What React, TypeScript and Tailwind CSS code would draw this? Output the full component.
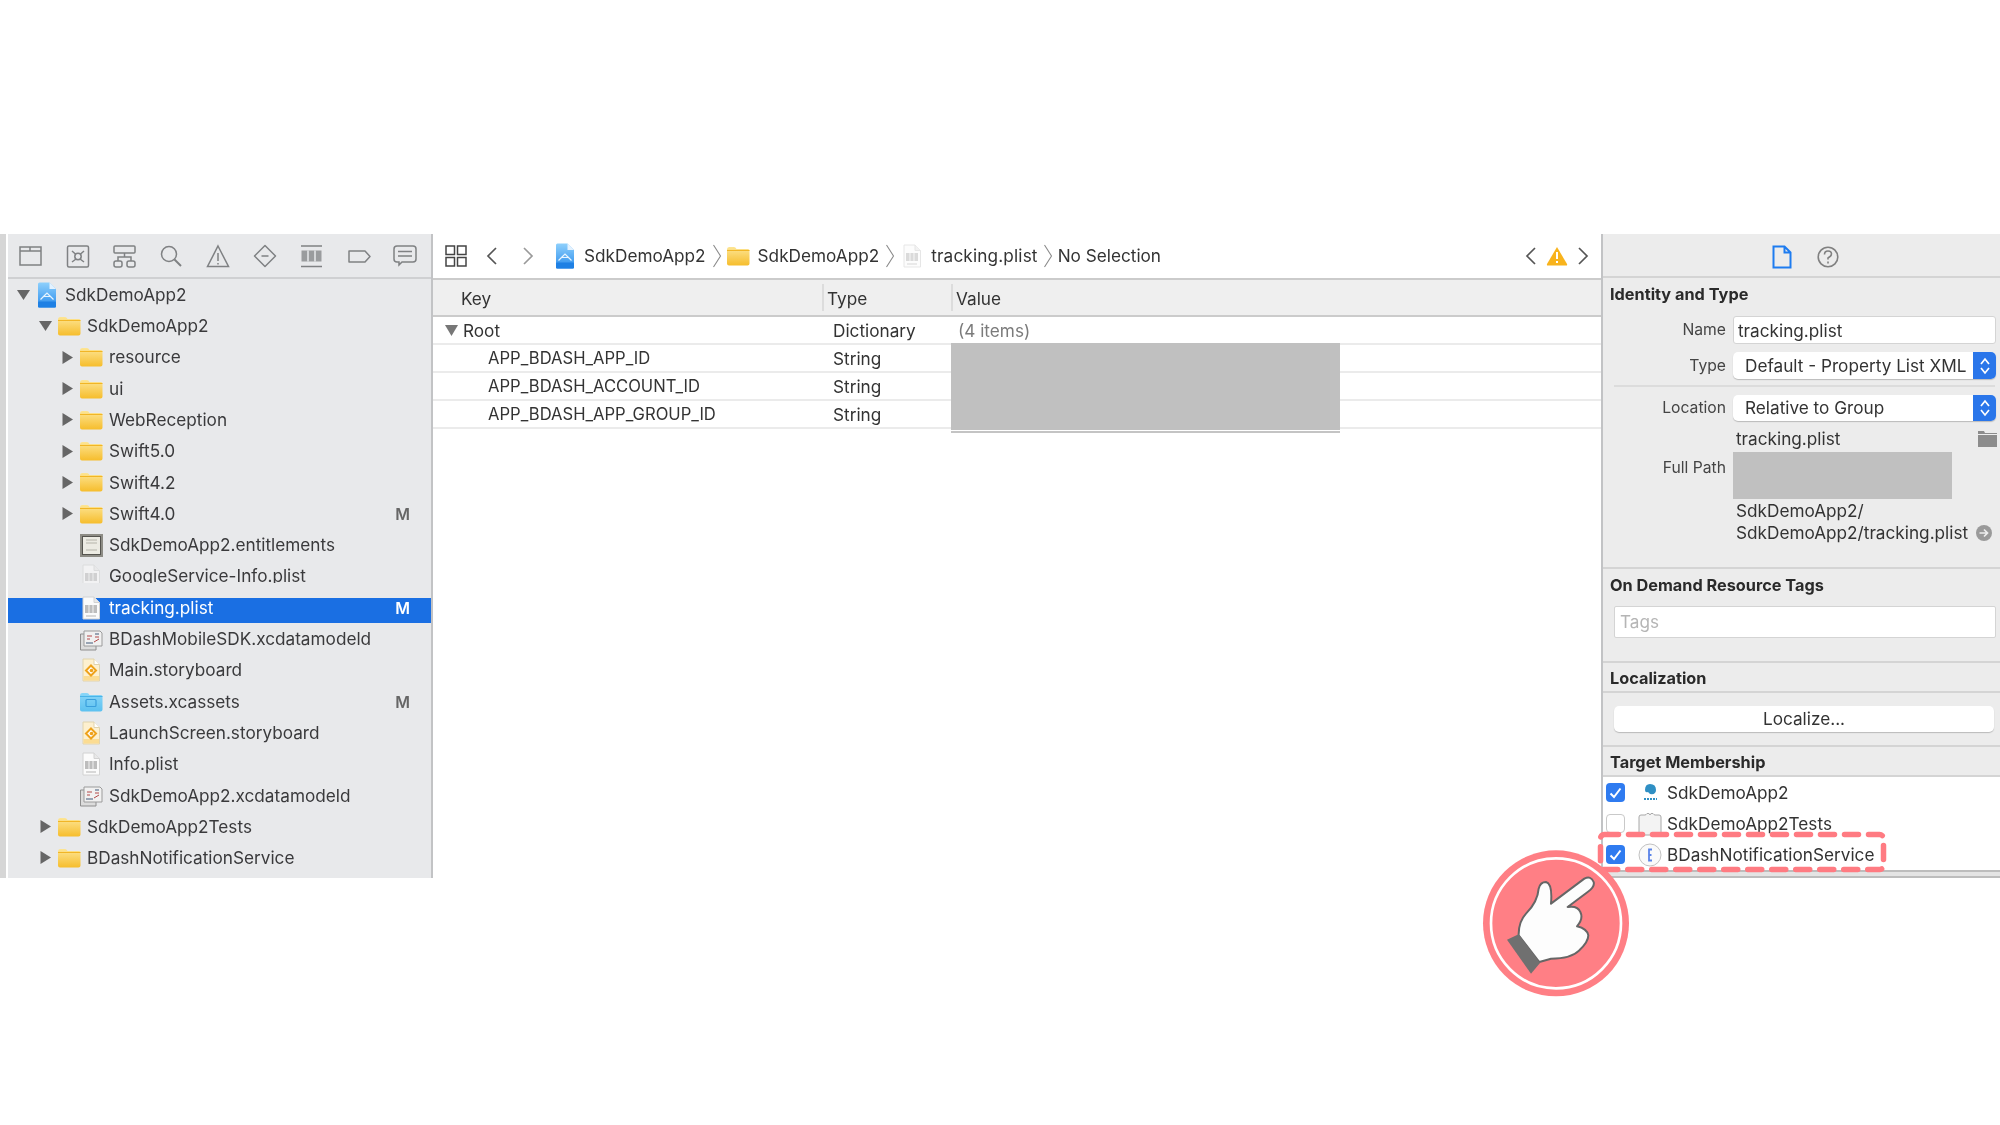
import React from "react";

const Folder = ({ blue = false }: { blue?: boolean }) => (
  <svg width="24" height="20" viewBox="0 0 24 20" className="shrink-0">
    <defs>
      <linearGradient id="fy" x1="0" y1="0" x2="0" y2="1">
        <stop offset="0" stopColor="#fde594" />
        <stop offset="1" stopColor="#f6bd2c" />
      </linearGradient>
      <linearGradient id="fb" x1="0" y1="0" x2="0" y2="1">
        <stop offset="0" stopColor="#8ad6f8" />
        <stop offset="1" stopColor="#5cc1f0" />
      </linearGradient>
    </defs>
    <path d="M1 3.5 Q1 1 3 1 H8 Q9.5 1 10.5 3 H22 Q23.5 3 23.5 5 V17.5 Q23.5 19.5 21.5 19.5 H3 Q1 19.5 1 17.5 Z" fill={blue ? "url(#fb)" : "url(#fy)"} />
    <path d="M1 4.5 H23.5" stroke={blue ? "#4ab4e8" : "#f1b526"} strokeWidth="1" />
    {blue && <rect x="7" y="7.5" width="10" height="7" rx="1" fill="none" stroke="#3a9fdc" strokeWidth="1.2" />}
  </svg>
);

const Plist = ({ faint = false }: { faint?: boolean }) => (
  <svg width="20" height="24" viewBox="0 0 20 24" className="shrink-0" opacity={faint ? 0.55 : 1}>
    <path d="M2 1 H13 L18.5 6.5 V23 H2 Z" fill="#fbfbfb" stroke="#d2d2d2" />
    <path d="M13 1 V6.5 H18.5" fill="#e8e8e8" stroke="#d2d2d2" />
    <rect x="4" y="9" width="12" height="8" fill="#bdbdbd" />
    <path d="M8 9 V17 M12 9 V17" stroke="#f2f2f2" />
    <path d="M5 20 H15" stroke="#b5b5b5" />
  </svg>
);

const Story = () => (
  <svg width="20" height="24" viewBox="0 0 20 24" className="shrink-0">
    <path d="M2 1 H13 L18.5 6.5 V23 H2 Z" fill="#fdf0cf" stroke="#e0d3ae" />
    <path d="M13 1 V6.5 H18.5" fill="#fff" stroke="#e0d3ae" />
    <rect x="2.5" y="18" width="15.5" height="4.5" fill="#fbdc92" />
    <path d="M10 7.5 L15 12.5 L10 17.5 L5 12.5 Z" fill="#fff" stroke="#eea21a" strokeWidth="2" />
    <circle cx="10.5" cy="12.5" r="1.8" fill="#eea21a" />
  </svg>
);

const DataModel = () => (
  <svg width="24" height="24" viewBox="0 0 24 24" className="shrink-0">
    <path d="M1.5 7 H17 V23 H1.5 Z" fill="#dcdcdc" stroke="#8e8e8e" />
    <path d="M5 4 H21 L23 6 V19 H5 Z" fill="#f1f1f1" stroke="#9b9b9b" />
    <path d="M8 9 H13 M8 12 H11 M16 10 H20 M15 15 L20 12" stroke="#b34a4a" strokeWidth="1" />
    <path d="M7 16 H14 M16 7 H20" stroke="#7b8aa0" strokeWidth="1.3" />
  </svg>
);

const Cert = () => (
  <svg width="24" height="24" viewBox="0 0 24 24" className="shrink-0">
    <rect x="1" y="1" width="23" height="23" fill="#8d8c85" />
    <rect x="3.5" y="3.5" width="18" height="18" fill="#ecebe3" stroke="#55544f" />
    <path d="M7 7 H18 M7 10 H18 M7 17 H18" stroke="#b5b4aa" />
  </svg>
);

const AppDoc = () => (
  <svg width="20" height="26" viewBox="0 0 20 26" className="shrink-0">
    <defs>
      <linearGradient id="ap" x1="0" y1="0" x2="0" y2="1">
        <stop offset="0" stopColor="#8ed0fc" />
        <stop offset="1" stopColor="#2a8cec" />
      </linearGradient>
    </defs>
    <path d="M1 2 Q1 .5 2.5 .5 H12.5 L19 7 V24 Q19 25.5 17.5 25.5 H2.5 Q1 25.5 1 24 Z" fill="url(#ap)" />
    <path d="M12.5 .5 V7 H19 Z" fill="#e3f2ff" />
    <path d="M3.5 17.5 L7 14 L10 11 L13 14 L16.5 17.5" fill="none" stroke="#e6f4ff" strokeWidth="1.2" />
    <path d="M7 14.5 H13" stroke="#e6f4ff" strokeWidth="1" />
    <rect x="1" y="19.5" width="18" height="6" rx="1" fill="#1e80e4" />
  </svg>
);

const Tri = ({ open }: { open: boolean }) => (
  <svg width="13" height="13" viewBox="0 0 13 13" className="shrink-0">
    {open ? <path d="M0 2 H13 L6.5 12 Z" fill="#666" /> : <path d="M1.5 0 L12 6.5 L1.5 13 Z" fill="#666" />}
  </svg>
);

const navStroke = { fill: "none", stroke: "#7f8183", strokeWidth: 1.5 };
const NavIcons = () => (
  <div className="flex items-center h-[45px] border-b-2 border-[#cfd0d2] pl-[6px] gap-[12.8px]">
    <svg width="34" height="22" viewBox="0 0 34 22" {...navStroke}><path d="M6 2 H27 V20 H6 Z M6 6 H27 M6 2 H16 V6" /></svg>
    <svg width="34" height="24" viewBox="0 0 34 24" {...navStroke}><rect x="6.5" y="2" width="21" height="21" rx="1.5" /><circle cx="17" cy="12.5" r="3.2" /><path d="M11 7 L15 10.5 M23 7 L19 10.5 M11 18 L15 15 M23 18 L19 15" /></svg>
    <svg width="34" height="24" viewBox="0 0 34 24" {...navStroke}><rect x="6" y="2" width="21" height="7" rx="1" /><rect x="6" y="17" width="8" height="6" rx="2" /><rect x="19" y="17" width="8" height="6" rx="2" /><path d="M10 17 V13 H23 V17 M16.5 9 V13" /></svg>
    <svg width="34" height="24" viewBox="0 0 34 24" {...navStroke}><circle cx="15" cy="10" r="7.5" /><path d="M20.5 15.5 L27 22" strokeWidth="2" /></svg>
    <svg width="34" height="24" viewBox="0 0 34 24" {...navStroke}><path d="M17 2 L27.5 22.5 H6.5 Z" /><path d="M17 9 V17 M17 19 V20.5" /></svg>
    <svg width="34" height="24" viewBox="0 0 34 24" {...navStroke}><path d="M17 1.5 L27.5 12 L17 22.5 L6.5 12 Z" strokeLinejoin="round" /><path d="M13.5 12 H20.5" /></svg>
    <svg width="34" height="24" viewBox="0 0 34 24" {...navStroke}><path d="M6 2 H27 M6 22.5 H27" /><rect x="6.5" y="6.5" width="20" height="11" fill="#9a9c9e" stroke="none" /><path d="M13 6.5 V17.5 M20 6.5 V17.5" stroke="#e8e9eb" /></svg>
    <svg width="34" height="24" viewBox="0 0 34 24" {...navStroke}><path d="M7 7 H23 L28 12.5 L23 18 H7 Z" strokeLinejoin="round" /></svg>
    <svg width="34" height="24" viewBox="0 0 34 24" {...navStroke}><path d="M9 2 H25 Q28 2 28 5 V15 Q28 18 25 18 H14 L11 21 V18 H9 Q6 18 6 15 V5 Q6 2 9 2 Z" /><path d="M10 7.5 H24 M10 12 H24" /></svg>
  </div>
);

type RowProps = { icon: React.ReactNode; label: string; tri?: "open" | "closed"; m?: boolean; indent: string };

const Row = ({ icon, label, tri, m, indent }: RowProps) => (
  <div className={`flex items-center h-[31.3px] pr-[21px] ${indent}`}>
    <div className="w-[13px] shrink-0">{tri && <Tri open={tri === "open"} />}</div>
    <div className="w-[28px] ml-[3px] shrink-0 flex justify-center">{icon}</div>
    <span className="ml-[4px] text-[17.2px] text-[#3a3a3c] whitespace-nowrap flex-1">{label}</span>
    {m && <span className="text-[16px] font-semibold text-[#666]">M</span>}
  </div>
);

const L0 = "pl-[9px]";
const L1 = "pl-[31px]";
const L2 = "pl-[53px]";

const Sidebar = () => (
  <div className="flex h-full shrink-0">
    <div className="w-[6px] bg-[#d6d6d6]" />
    <div className="w-[2px] bg-white" />
    <div className="w-[423px] bg-[#e8e9eb] flex flex-col overflow-hidden">
      <NavIcons />
      <Row indent={L0} tri="open" icon={<AppDoc />} label="SdkDemoApp2" />
      <Row indent={L1} tri="open" icon={<Folder />} label="SdkDemoApp2" />
      <Row indent={L2} tri="closed" icon={<Folder />} label="resource" />
      <Row indent={L2} tri="closed" icon={<Folder />} label="ui" />
      <Row indent={L2} tri="closed" icon={<Folder />} label="WebReception" />
      <Row indent={L2} tri="closed" icon={<Folder />} label="Swift5.0" />
      <Row indent={L2} tri="closed" icon={<Folder />} label="Swift4.2" />
      <Row indent={L2} tri="closed" icon={<Folder />} label="Swift4.0" m />
      <Row indent={L2} icon={<Cert />} label="SdkDemoApp2.entitlements" />
      <div className="h-[31.3px] shrink-0">
        <div className="h-[22px] overflow-hidden">
          <div className="flex items-center h-[31.3px] pl-[53px]">
            <div className="w-[13px] shrink-0" />
            <div className="w-[28px] ml-[3px] shrink-0 flex justify-center"><Plist faint /></div>
            <span className="ml-[4px] text-[17.2px] text-[#3a3a3c] whitespace-nowrap">GoogleService-Info.plist</span>
          </div>
        </div>
      </div>
      <div className="flex items-start h-[25.3px] shrink-0 mt-[6px] pl-[53px] pr-[21px] bg-[#1a6fe3]">
        <div className="w-[13px] shrink-0" />
        <div className="w-[28px] ml-[3px] shrink-0 flex justify-center mt-[-2px]"><Plist /></div>
        <span className="ml-[4px] text-[17.2px] leading-[20px] text-white whitespace-nowrap flex-1">tracking.plist</span>
        <span className="text-[16px] leading-[20px] font-semibold text-white">M</span>
      </div>
      <Row indent={L2} icon={<DataModel />} label="BDashMobileSDK.xcdatamodeld" />
      <Row indent={L2} icon={<Story />} label="Main.storyboard" />
      <Row indent={L2} icon={<Folder blue />} label="Assets.xcassets" m />
      <Row indent={L2} icon={<Story />} label="LaunchScreen.storyboard" />
      <Row indent={L2} icon={<Plist />} label="Info.plist" />
      <Row indent={L2} icon={<DataModel />} label="SdkDemoApp2.xcdatamodeld" />
      <Row indent={L1} tri="closed" icon={<Folder />} label="SdkDemoApp2Tests" />
      <Row indent={L1} tri="closed" icon={<Folder />} label="BDashNotificationService" />
    </div>
  </div>
);

const Chev = ({ dir, color = "#555" }: { dir: "l" | "r"; color?: string }) => (
  <svg width="12" height="20" viewBox="0 0 12 20" fill="none" stroke={color} strokeWidth="1.7" className="shrink-0">
    <path d={dir === "l" ? "M10 2 L2 10 L10 18" : "M2 2 L10 10 L2 18"} />
  </svg>
);
const Crumb = () => (
  <svg width="10" height="24" viewBox="0 0 10 24" fill="none" stroke="#8a8a8a" strokeWidth="1.1" className="shrink-0">
    <path d="M1.5 1 L8.5 12 L1.5 23" />
  </svg>
);

const PlistRow = ({ k, v }: { k: string; v: string }) => (
  <div className="flex items-center h-[28px] pt-[1px] border-b-2 border-[#ebebeb] text-[#333]">
    <span className="w-[400px] pl-[55px] whitespace-nowrap text-[16.6px]">{k}</span>
    <span className="text-[17.2px]">{v}</span>
  </div>
);

const Center = () => (
  <div className="flex-1 min-w-0 flex flex-col border-l-2 border-r-2 border-[#c2c3c5]">
    <div className="flex items-center h-[46px] border-b-2 border-[#cbcbcb] pl-[12px] pr-[12px] text-[17.2px] text-[#333]">
      <svg width="22" height="22" viewBox="0 0 22 22" fill="none" stroke="#444" strokeWidth="1.5" className="shrink-0">
        <rect x="1" y="1" width="8.5" height="8.5" /><rect x="12.5" y="1" width="8.5" height="8.5" /><rect x="1" y="12.5" width="8.5" height="8.5" /><rect x="12.5" y="12.5" width="8.5" height="8.5" />
      </svg>
      <div className="ml-[19px]"><Chev dir="l" /></div>
      <div className="ml-[24px]"><Chev dir="r" color="#9a9a9a" /></div>
      <div className="ml-[21px] flex items-center gap-[9px]"><AppDoc /><span>SdkDemoApp2</span></div>
      <div className="ml-[6px]"><Crumb /></div>
      <div className="ml-[4px]"><Folder /></div>
      <span className="ml-[8px]">SdkDemoApp2</span>
      <div className="ml-[6px]"><Crumb /></div>
      <div className="ml-[7px]"><Plist faint /></div>
      <span className="ml-[9px] tracking-[0.15px]">tracking.plist</span>
      <div className="ml-[5px]"><Crumb /></div>
      <span className="ml-[5px]">No Selection</span>
      <div className="flex-1" />
      <Chev dir="l" />
      <svg width="22" height="20" viewBox="0 0 22 20" className="ml-[9px] shrink-0">
        <path d="M11 1 L21 18 Q21.5 19.5 20 19.5 H2 Q.5 19.5 1 18 Z" fill="#f8b31c" />
        <path d="M11 6 V13 M11 15 V17" stroke="#fff" strokeWidth="2" />
      </svg>
      <div className="ml-[9px]"><Chev dir="r" /></div>
    </div>
    <div className="flex items-center h-[37px] bg-[#efefef] border-b-2 border-[#cbcbcb] text-[17.2px] text-[#333]">
      <span className="w-[391px] pl-[28px] h-[27px] leading-[29px] border-r-2 border-[#dcdcdc]">Key</span>
      <span className="w-[129px] pl-[3px] h-[27px] leading-[29px] border-r-2 border-[#dcdcdc]">Type</span>
      <span className="pl-[3px] pt-[2px]">Value</span>
    </div>
    <div className="flex items-center h-[28px] pt-[1px] border-b-2 border-[#ebebeb] text-[17.2px] text-[#333]">
      <div className="w-[400px] pl-[12px] flex items-center gap-[5px]">
        <svg width="13" height="11" viewBox="0 0 13 11"><path d="M0 0 H13 L6.5 11 Z" fill="#777" /></svg>
        <span>Root</span>
      </div>
      <span className="w-[125px]">Dictionary</span>
      <span className="text-[#7b7b7b]">(4 items)</span>
    </div>
    <PlistRow k="APP_BDASH_APP_ID" v="String" />
    <PlistRow k="APP_BDASH_ACCOUNT_ID" v="String" />
    <PlistRow k="APP_BDASH_APP_GROUP_ID" v="String" />
  </div>
);

const Stepper = () => (
  <div className="w-[23px] h-full bg-[#2a76ea] rounded-r-[5px] flex items-center justify-center shrink-0">
    <svg width="12" height="20" viewBox="0 0 12 20" fill="none" stroke="#fff" strokeWidth="1.7"><path d="M2 8 L6 3 L10 8 M2 12 L6 17 L10 12" /></svg>
  </div>
);

const Popup = ({ text, h }: { text: string; h: string }) => (
  <div className={`flex items-center flex-1 ${h} bg-white rounded-[5px] shadow-[0_1px_1px_#bbb] text-[17.2px] text-[#333] pl-[12px]`}>
    <span className="flex-1 whitespace-nowrap">{text}</span>
    <Stepper />
  </div>
);

const Label = ({ children }: { children: React.ReactNode }) => (
  <span className="w-[130px] shrink-0 pr-[7px] text-right text-[15.7px] text-[#444]">{children}</span>
);

const Heading = ({ children }: { children: React.ReactNode }) => (
  <div className="text-[16.3px] font-bold text-[#2a2a2a] pl-[7px] pt-[2px] whitespace-nowrap">{children}</div>
);

const CheckBox = ({ on }: { on: boolean }) =>
  on ? (
    <div className="w-[19px] h-[19px] bg-[#2f7bf0] rounded-[4px] flex items-center justify-center shrink-0">
      <svg width="13" height="12" viewBox="0 0 13 12" fill="none" stroke="#fff" strokeWidth="2"><path d="M1.5 6.5 L5 10 L11.5 1.5" /></svg>
    </div>
  ) : (
    <div className="w-[19px] h-[19px] bg-white border border-[#c9c9c9] rounded-[4px] shrink-0" />
  );

const Inspector = () => (
  <div className="w-[397px] shrink-0 bg-[#ececec] flex flex-col">
    <div className="flex items-center h-[44px] pt-[4px] border-b-2 border-[#d4d4d4] pl-[169px] gap-[25px] shrink-0">
      <svg width="20" height="24" viewBox="0 0 20 24" fill="none" stroke="#1e7cf0" strokeWidth="2"><path d="M1.5 1.5 H12.5 L18.5 7.5 V22.5 H1.5 Z M12.5 1.5 V7.5 H18.5" /></svg>
      <svg width="22" height="22" viewBox="0 0 22 22" fill="none" stroke="#808080" strokeWidth="1.6"><circle cx="11" cy="11" r="9.8" /><path d="M7.5 8.5 Q7.5 5 11 5 Q14.5 5 14.5 8 Q14.5 10 11 12 V13.5 M11 15.5 V17.5" /></svg>
    </div>
    <div className="h-[291px] border-b-2 border-[#d4d4d4] shrink-0 flex flex-col">
      <div className="h-[30px] flex items-center"><Heading>Identity and Type</Heading></div>
      <div className="flex items-center h-[28px] mt-[8px] pr-[4px]">
        <Label>Name</Label>
        <div className="flex-1 h-full bg-white border border-[#d4d4d4] rounded-[3px] pl-[4px] text-[17.2px] text-[#333] leading-[27px]">tracking.plist</div>
      </div>
      <div className="flex items-center h-[27px] mt-[8px] pr-[4px]">
        <Label>Type</Label>
        <Popup text="Default - Property List XML" h="h-[27px]" />
      </div>
      <div className="h-[2px] bg-[#dcdcdc] ml-[11px] mr-[5px] mt-[6px]" />
      <div className="flex items-center h-[26px] mt-[8px] pr-[4px]">
        <Label>Location</Label>
        <Popup text="Relative to Group" h="h-[26px]" />
      </div>
      <div className="flex items-center h-[22px] mt-[7px] pl-[133px] pr-[3px] text-[17.2px] text-[#333]">
        <span className="flex-1">tracking.plist</span>
        <svg width="19" height="16" viewBox="0 0 19 16"><path d="M0 0 H6 L7 2 H19 V16 H0 Z" fill="#8c8c8c" /><path d="M0 3.5 H19" stroke="#eee" /></svg>
      </div>
      <div className="flex items-center h-[22px] mt-[7px] pr-[4px]"><Label>Full Path</Label></div>
      <div className="pl-[133px] mt-[21px] pr-[8px] text-[17.2px] text-[#333] leading-[22px]">
        <div>SdkDemoApp2/</div>
        <div className="flex items-center justify-between">
          <span>SdkDemoApp2/tracking.plist</span>
          <svg width="16" height="16" viewBox="0 0 16 16"><circle cx="8" cy="8" r="8" fill="#9a9a9a" /><path d="M3.5 8 H11 M8 4.5 L11.5 8 L8 11.5" fill="none" stroke="#eee" strokeWidth="1.7" /></svg>
        </div>
      </div>
    </div>
    <div className="h-[94px] border-b-2 border-[#d4d4d4] shrink-0 flex flex-col">
      <div className="h-[30px] flex items-center"><Heading>On Demand Resource Tags</Heading></div>
      <div className="h-[32px] mt-[7px] ml-[11px] mr-[4px] bg-white border border-[#d4d4d4] rounded-[2px] pl-[5px] text-[17.2px] leading-[30px] text-[#b5b5b5]">Tags</div>
    </div>
    <div className="h-[30px] border-b-2 border-[#d4d4d4] shrink-0 flex items-center"><Heading>Localization</Heading></div>
    <div className="h-[54px] border-b-2 border-[#d4d4d4] shrink-0 pt-[13px]">
      <div className="h-[26px] ml-[11px] mr-[6px] bg-white rounded-[5px] shadow-[0_1px_1px_#bbb] text-center text-[17.2px] leading-[26px] text-[#333]">Localize...</div>
    </div>
    <div className="h-[30px] border-b-2 border-[#d4d4d4] shrink-0 flex items-center"><Heading>Target Membership</Heading></div>
    <div className="h-[93px] bg-white shrink-0 flex flex-col pl-[3px] text-[17.2px] text-[#333]">
      <div className="h-[31px] flex items-center">
        <CheckBox on />
        <svg width="24" height="24" viewBox="0 0 24 24" className="ml-[13px] shrink-0"><path d="M7 9 Q7 3 12 3 Q18 3 18 9 Q18 14 12 13 L10 11 Q7 12 7 9 Z" fill="#2f8fc4" /><path d="M6 18 H19" stroke="#2f8fc4" strokeWidth="2" strokeDasharray="2 1" /></svg>
        <span className="ml-[5px]">SdkDemoApp2</span>
      </div>
      <div className="h-[31px] flex items-center">
        <CheckBox on={false} />
        <svg width="24" height="24" viewBox="0 0 24 24" className="ml-[13px] shrink-0"><path d="M1 5 Q1 3 3 3 H7 Q8 3 9 1.5 H11 L12 3 L13 1.5 H15 Q16 3 17 3 H21 Q23 3 23 5 V23 H1 Z" fill="#f3f3f3" stroke="#a8a8a8" /></svg>
        <span className="ml-[5px]">SdkDemoApp2Tests</span>
      </div>
      <div className="h-[31px] flex items-center">
        <CheckBox on />
        <svg width="24" height="24" viewBox="0 0 24 24" className="ml-[13px] shrink-0"><circle cx="12" cy="12" r="11" fill="#fafafa" stroke="#c2c2c2" /><path d="M14 6.5 H11 V17.5 H14 M11 12 H13.5" fill="none" stroke="#5b84e8" strokeWidth="1.8" /></svg>
        <span className="ml-[5px]">BDashNotificationService</span>
      </div>
    </div>
    <div className="h-[8px] bg-[#e4e4e4] border-t-2 border-b-2 border-[#bdbdbd] shrink-0" />
  </div>
);

const Annotations = () => (
  <>
    <div className="absolute left-[951px] top-[343px] w-[389px] h-[87px] bg-[#c0c0c0]" />
    <div className="absolute left-[951px] top-[431px] w-[389px] h-[2px] bg-[#c4c4c4]" />
    <div className="absolute left-[1733px] top-[452px] w-[219px] h-[47px] bg-[#c0c0c0]" />
    <svg className="absolute left-[1595px] top-[829px]" width="294" height="46" viewBox="0 0 294 46" fill="none">
      <rect x="5.5" y="5.5" width="283" height="35" rx="4" stroke="#ff7b82" strokeWidth="5.5" strokeDasharray="14 10" strokeLinecap="round" />
    </svg>
    <svg className="absolute left-[1481px] top-[847px]" width="150" height="150" viewBox="30 860 450 450">
      <circle cx="255" cy="1089" r="219" fill="#ff7f85" />
      <circle cx="255" cy="1089" r="195" fill="none" stroke="#fff" strokeWidth="8" />
      <path d="M143 1125 Q142 1085 165 1060 Q200 1025 203 985 Q208 965 225 965 Q245 970 240 1030 L340 955 Q360 945 368 965 Q372 980 350 995 L290 1040 Q320 1035 328 1055 Q338 1075 318 1098 Q348 1105 352 1125 Q352 1145 325 1170 Q300 1195 240 1195 L205 1205 Z" fill="#fdfdfd" stroke="#666" strokeWidth="6" strokeLinejoin="round" />
      <path d="M108 1138 L143 1122 L207 1208 L180 1240 Z" fill="#707070" />
    </svg>
  </>
);

export default function App() {
  return (
    <div className="relative w-[2000px] h-[1125px] bg-white overflow-hidden [font-family:Inter,sans-serif] blur-[0.5px]">
      <div className="h-[234px]" />
      <div className="flex h-[644px]">
        <Sidebar />
        <Center />
        <Inspector />
      </div>
      <Annotations />
    </div>
  );
}
